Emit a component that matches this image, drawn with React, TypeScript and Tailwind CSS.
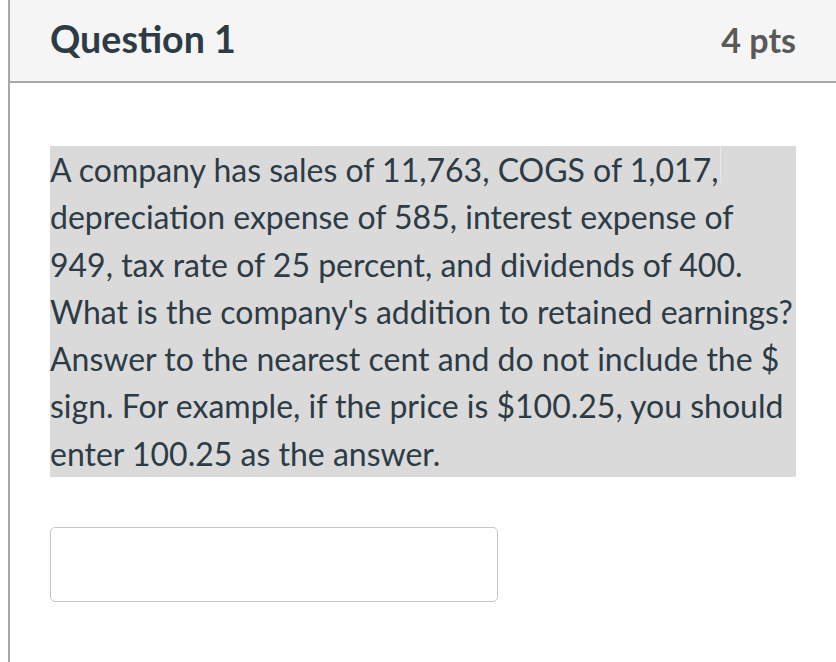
const lines = [
  "A company has sales of 11,763, COGS of 1,017,",
  "depreciation expense of 585, interest expense of",
  "949, tax rate of 25 percent, and dividends of 400.",
  "What is the company's addition to retained earnings?",
  "Answer to the nearest cent and do not include the $",
  "sign. For example, if the price is $100.25, you should",
  "enter 100.25 as the answer.",
];

export default function App() {
  return (
    <div className="h-[662px] w-[836px] overflow-hidden bg-white font-['Lato','Noto_Sans',sans-serif]">
      <div className="ml-[8px] h-full border-l-2 border-[#a8a8a8]">
        {/* Header */}
        <div className="flex h-[83px] items-center justify-between border-b-2 border-[#a8a8a8] bg-[#f5f5f5] pb-[2px] pl-[40px] pr-[40px]">
          <h2 className="text-[37.6px] font-bold text-[#2d3b45]">Question 1</h2>
          <span className="text-[34px] font-bold text-[#595959]">4 pts</span>
        </div>

        {/* Body */}
        <div className="pl-[40px] pr-[40px] pt-[63px]">
          <p className="w-[746px] whitespace-nowrap bg-[#dadada] text-[32px] leading-[47.3px] text-[#2d3b45]">
            {lines.map((l, i) => (
              <span key={i} className="block">
                {l}
                {i === 0 && <span className="ml-[2px] inline-block h-[37px] w-px bg-[#e8e8e8] align-top" />}
              </span>
            ))}
          </p>
          <input
            type="text"
            className="mt-[50px] block h-[75px] w-[448px] rounded-[5px] border border-[#c4c8cc] bg-white"
          />
        </div>
      </div>
    </div>
  );
}
